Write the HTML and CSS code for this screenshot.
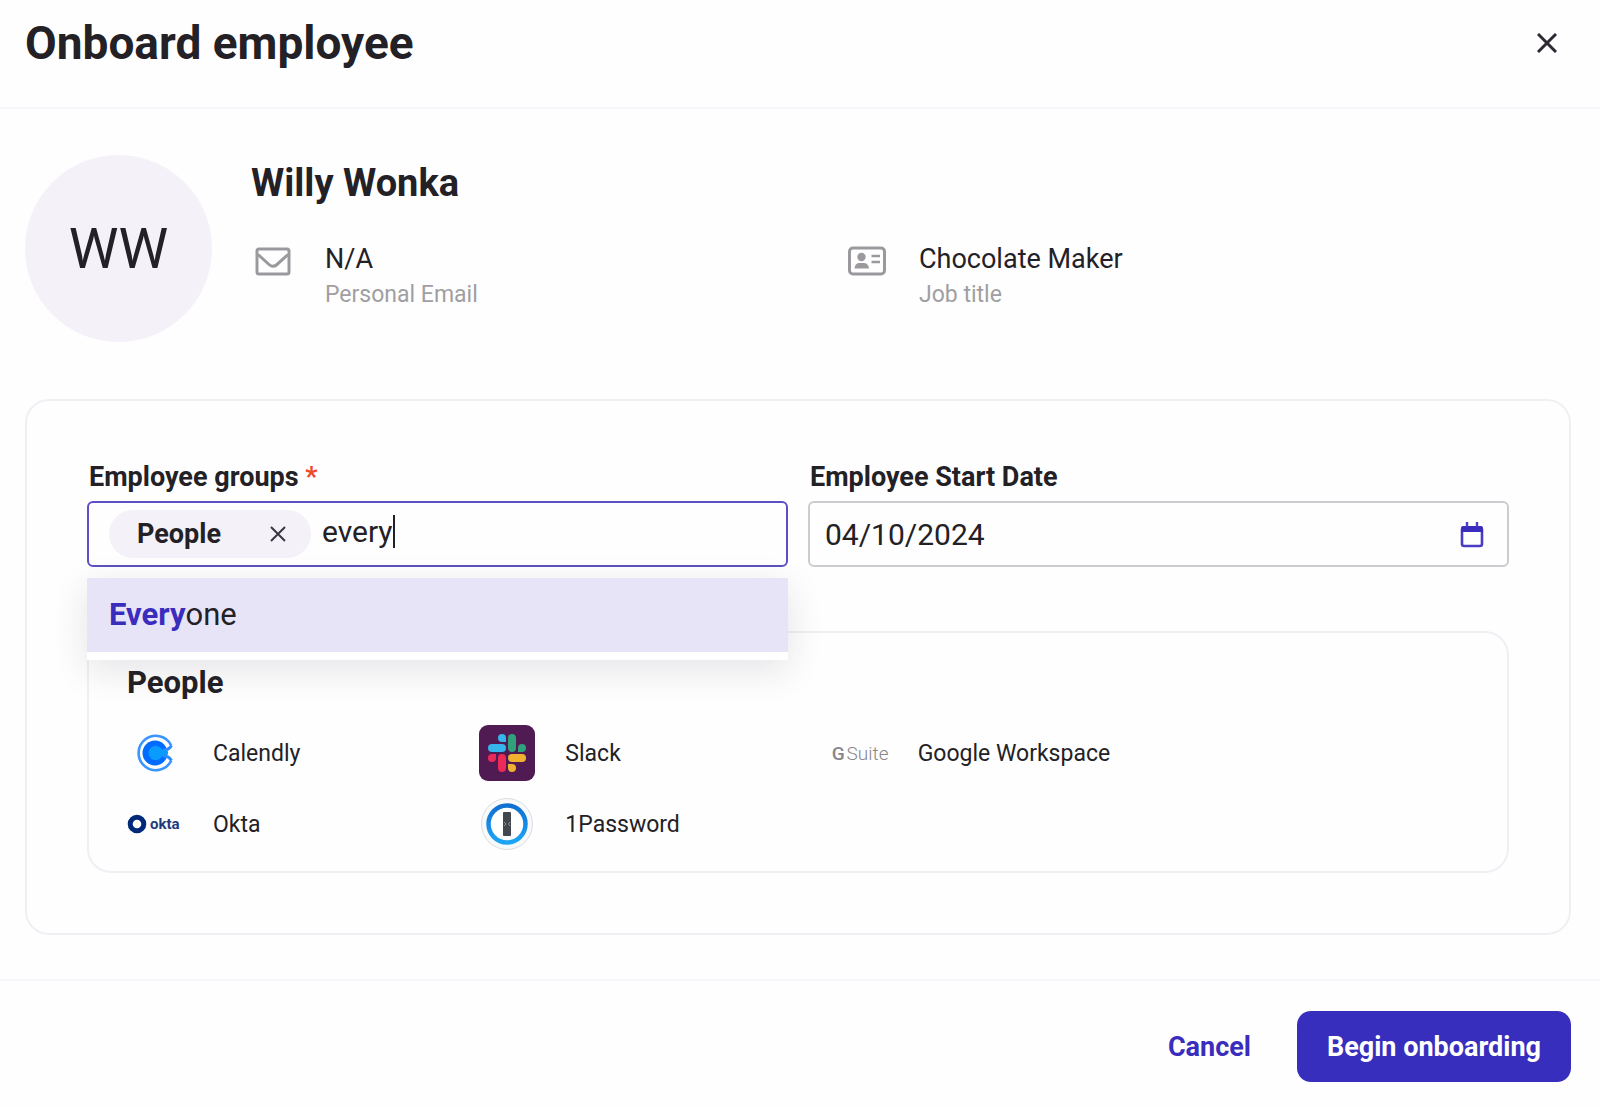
FILE: index.html
```html
<!DOCTYPE html>
<html lang="en">
<head>
  <meta charset="UTF-8">
  <meta name="viewport" content="width=device-width, initial-scale=1.0">
  <title>Onboard employee</title>
  <link rel="stylesheet" href="styles.css">
</head>
<body>
  <!-- Header -->
  <header class="dialog-header">
    <h1>Onboard employee</h1>
    <button type="button" class="icon-button" aria-label="Close">
      <svg width="20" height="20" viewBox="0 0 20 20"><path d="M1 1L19 19M19 1L1 19" stroke="#2d2a33" stroke-width="3" fill="none"/></svg>
    </button>
  </header>

  <!-- Employee -->
  <section class="profile">
    <div class="avatar">WW</div>
    <div class="profile-info">
      <h2>Willy Wonka</h2>
      <div class="details">
        <div class="detail">
          <svg width="44" height="36" viewBox="0 0 44 36">
            <rect x="6" y="8" width="32" height="25" rx="2" fill="none" stroke="#9b999e" stroke-width="3"/>
            <path d="M7 13.500L18 23.500Q22 27 26 23.500L37 13.500" fill="none" stroke="#9b999e" stroke-width="3"/>
          </svg>
          <div>
            <p class="detail-value">N/A</p>
            <p class="detail-label">Personal Email</p>
          </div>
        </div>
        <div class="detail">
          <svg width="44" height="36" viewBox="0 0 44 36">
            <rect x="4.500" y="7" width="35" height="26" rx="3.500" fill="none" stroke="#9b999e" stroke-width="3"/>
            <circle cx="16.500" cy="16" r="4.200" fill="#9b999e"/>
            <path d="M9.500 27.500Q10 22 14.500 22H18.500Q23.500 22 24 27.500Z" fill="#9b999e"/>
            <path d="M26.500 15H35M26.500 21H35" stroke="#9b999e" stroke-width="2.600"/>
          </svg>
          <div>
            <p class="detail-value">Chocolate Maker</p>
            <p class="detail-label">Job title</p>
          </div>
        </div>
      </div>
    </div>
  </section>

  <!-- Form -->
  <form class="card" id="onboarding">
    <div class="fields">
      <div class="field">
        <label for="groups">Employee groups <span class="required">*</span></label>
        <div class="control focused">
          <span class="chip">
            People
            <button type="button" class="chip-remove" aria-label="Remove People">
              <svg width="16" height="16" viewBox="0 0 16 16"><path d="M1 1L15 15M15 1L1 15" stroke="#3a3740" stroke-width="2" fill="none"/></svg>
            </button>
          </span>
          <div class="entry">
            <input type="text" id="groups" class="groups-input" value="every" autocomplete="off">
            <span class="caret"></span>
          </div>
        </div>
        <ul class="options">
          <li><button type="button" class="option"><b>Every</b>one</button></li>
        </ul>
      </div>
      <div class="field">
        <label for="start-date">Employee Start Date</label>
        <div class="control">
          <input type="text" id="start-date" class="date-input" value="04/10/2024">
          <button type="button" class="icon-button" aria-label="Choose date">
            <svg width="24" height="28" viewBox="0 0 24 28">
              <rect x="2" y="8" width="20" height="18" rx="2" fill="none" stroke="#4a3dc4" stroke-width="2.600"/>
              <path d="M3 6H21Q23 6 23 8V12H1V8Q1 6 3 6Z" fill="#3a2dbd"/>
              <path d="M7 2V7M17 2V7" stroke="#4a3dc4" stroke-width="2.400"/>
            </svg>
          </button>
        </div>
      </div>
    </div>

    <!-- Apps of the selected group -->
    <section class="apps">
      <h3>People</h3>
      <ul class="app-grid">
        <li class="app">
          <svg width="56" height="56" viewBox="0 0 56 56">
            <path d="M44.300 20.500A17.200 17.200 0 1 0 44.300 35.500" fill="none" stroke="#3b95ff" stroke-width="2.600"/>
            <circle cx="28" cy="28" r="12.500" fill="#006bff"/>
            <path d="M44.500 20.500Q41.500 25.500 36 25M44.500 35.500Q41.500 30.500 36 31" fill="none" stroke="#2b8dff" stroke-width="3"/>
            <path d="M35 24.500A7.200 7.200 0 1 0 35 31.500L41 29V26.500Z" fill="#0a9bff"/>
          </svg>
          <span>Calendly</span>
        </li>
        <li class="app">
          <svg width="56" height="56" viewBox="0 0 56 56">
            <rect width="56" height="56" rx="9" fill="#501a52"/>
            <g fill="#36b5ea"><rect x="9" y="19" width="18" height="8" rx="4"/><path d="M27 17H23A4 4 0 1 1 27 13Z"/></g>
            <g fill="#2fa27c"><rect x="29" y="9" width="8" height="18" rx="4"/><path d="M39 27V23A4 4 0 1 1 43 27Z"/></g>
            <g fill="#f0b030"><rect x="29" y="29" width="18" height="8" rx="4"/><path d="M29 39H33A4 4 0 1 1 29 43Z"/></g>
            <g fill="#ec2a5a"><rect x="19" y="29" width="8" height="18" rx="4"/><path d="M17 29V33A4 4 0 1 1 13 29Z"/></g>
          </svg>
          <span>Slack</span>
        </li>
        <li class="app">
          <span class="gsuite-logo" aria-hidden="true"><b>G</b>Suite</span>
          <span>Google Workspace</span>
        </li>
        <li class="app">
          <span class="okta-logo" aria-hidden="true">
            <svg width="20" height="20" viewBox="0 0 20 20"><circle cx="10" cy="10" r="6.800" fill="none" stroke="#00297a" stroke-width="5"/></svg>
            okta
          </span>
          <span>Okta</span>
        </li>
        <li class="app">
          <svg width="56" height="56" viewBox="0 0 56 56">
            <defs>
              <linearGradient id="ring" x1="0" y1="0" x2="0" y2="1"><stop offset="0" stop-color="#0f6fd0"/><stop offset="1" stop-color="#1da5f5"/></linearGradient>
            </defs>
            <circle cx="28" cy="28" r="25.500" fill="#f8f9fb" stroke="#d9dde2" stroke-width="1"/>
            <circle cx="28" cy="28" r="18.500" fill="#fff" stroke="url(#ring)" stroke-width="4.500"/>
            <rect x="24" y="16" width="8" height="24" rx="1" fill="#43484e"/>
            <path d="M25 26L27 28L25 30M31 26L29.500 28L31 30" fill="none" stroke="#8d9298" stroke-width="1"/>
          </svg>
          <span>1Password</span>
        </li>
      </ul>
    </section>
  </form>

  <!-- Footer -->
  <footer class="dialog-footer">
    <button type="button" class="button button-text">Cancel</button>
    <button type="submit" form="onboarding" class="button button-primary">Begin onboarding</button>
  </footer>
</body>
</html>
```
FILE: styles.css
```css
/* Global Styles */
* {
  box-sizing: border-box;
}

body {
  margin: 0;
  font-family: Roboto, "Liberation Sans", sans-serif;
  font-size: 23px;
  color: #232126;
  background-color: #fefefe;
}

h1, h2, h3, p, ul {
  margin: 0;
  padding: 0;
}

ul {
  list-style: none;
}

svg {
  display: block;
  flex-shrink: 0;
}

button, input {
  font-family: inherit;
  color: inherit;
}

button {
  padding: 0;
  border: none;
  background: none;
  cursor: pointer;
}

/* Header */
.dialog-header {
  display: flex;
  justify-content: space-between;
  align-items: center;
  padding: 17px 29px 38px 25px;
  border-bottom: 2px solid #f7f5f9;
}

.dialog-header h1 {
  font-size: 46px;
  line-height: 52px;
}

.icon-button {
  display: flex;
  justify-content: center;
  align-items: center;
  width: 48px;
  height: 48px;
}

/* Employee */
.profile {
  display: flex;
  gap: 39px;
  padding: 46px 29px 57px 25px;
}

.avatar {
  display: flex;
  justify-content: center;
  align-items: center;
  flex-shrink: 0;
  width: 187px;
  height: 187px;
  border-radius: 50%;
  background-color: #f4f1f9;
  font-size: 56px;
}

.profile-info {
  flex: 1;
  padding-top: 6px;
}

.profile-info h2 {
  margin-bottom: 36px;
  font-size: 38px;
  line-height: 44px;
}

.details {
  display: grid;
  grid-template-columns: 45% 1fr;
}

.detail {
  display: flex;
  gap: 30px;
}

.detail-value {
  font-size: 27px;
  line-height: 36px;
}

.detail-label {
  line-height: 36px;
  color: #a09ea3;
}

/* Form */
.card {
  margin: 0 29px 44px 25px;
  padding: 58px 60px 60px;
  border: 2px solid #f1eff3;
  border-radius: 24px;
}

.fields {
  display: grid;
  grid-template-columns: 1fr 1fr;
  gap: 20px;
  margin-bottom: 64px;
}

.field {
  position: relative;
}

.field label {
  display: block;
  margin-bottom: 6px;
  padding-left: 2px;
  font-size: 27px;
  font-weight: bold;
  line-height: 36px;
}

.required {
  color: #f04a2a;
}

.control {
  display: flex;
  align-items: center;
  height: 66px;
  padding: 0 11px 0 15px;
  border: 2px solid #cdcbd0;
  border-radius: 6px;
}

.control.focused {
  padding-left: 20px;
  border-color: #5c50c4;
}

.control input {
  padding: 0;
  border: none;
  outline: none;
  background: none;
  font-size: 30px;
}

.chip {
  display: flex;
  align-items: center;
  gap: 39px;
  height: 48px;
  margin-right: 11px;
  padding: 0 15px 0 28px;
  border-radius: 24px;
  background-color: #f4f1f9;
  font-size: 27px;
  font-weight: bold;
}

.chip-remove {
  padding: 10px;
}

.entry {
  display: flex;
  align-items: center;
  padding-bottom: 6px;
}

.groups-input {
  field-sizing: content;
}

.caret {
  width: 2px;
  height: 33px;
  background-color: #232126;
}

.date-input {
  flex: 1;
  min-width: 0;
}

/* Suggestions */
.options {
  position: absolute;
  top: 119px;
  left: 0;
  right: 0;
  padding-bottom: 8px;
  background-color: #fff;
  box-shadow: 0 10px 36px rgba(40, 30, 60, 0.12);
}

.option {
  display: block;
  width: 100%;
  padding: 0 22px;
  background-color: #e8e4f8;
  font-size: 31px;
  line-height: 74px;
  text-align: left;
}

.option b {
  color: #3a2dbd;
}

/* Apps */
.apps {
  padding: 32px 0 19px 38px;
  border: 2px solid #f1eff3;
  border-radius: 24px;
}

.apps h3 {
  margin-bottom: 24px;
  font-size: 31px;
  line-height: 36px;
}

.app-grid {
  display: grid;
  grid-template-columns: repeat(3, 1fr);
  gap: 15px 22px;
  width: 75%;
}

.app {
  display: flex;
  align-items: center;
  gap: 30px;
  height: 56px;
}

.gsuite-logo,
.okta-logo {
  display: flex;
  align-items: center;
  flex-shrink: 0;
  width: 56px;
}

.gsuite-logo {
  gap: 2px;
  font-size: 19px;
  font-weight: 300;
  color: #88868a;
}

.gsuite-logo b {
  font-weight: 500;
}

.okta-logo {
  gap: 3px;
  font-size: 15px;
  font-weight: bold;
  color: #1d3a7d;
}

/* Footer */
.dialog-footer {
  display: flex;
  justify-content: flex-end;
  gap: 16px;
  padding: 30px 29px 26px;
  border-top: 2px solid #f7f5f9;
}

.button {
  height: 71px;
  padding: 0 30px;
  border-radius: 14px;
  font-size: 27px;
  font-weight: bold;
}

.button-text {
  color: #3a2dbd;
}

.button-primary {
  color: #fff;
  background-color: #372ebd;
}
```
